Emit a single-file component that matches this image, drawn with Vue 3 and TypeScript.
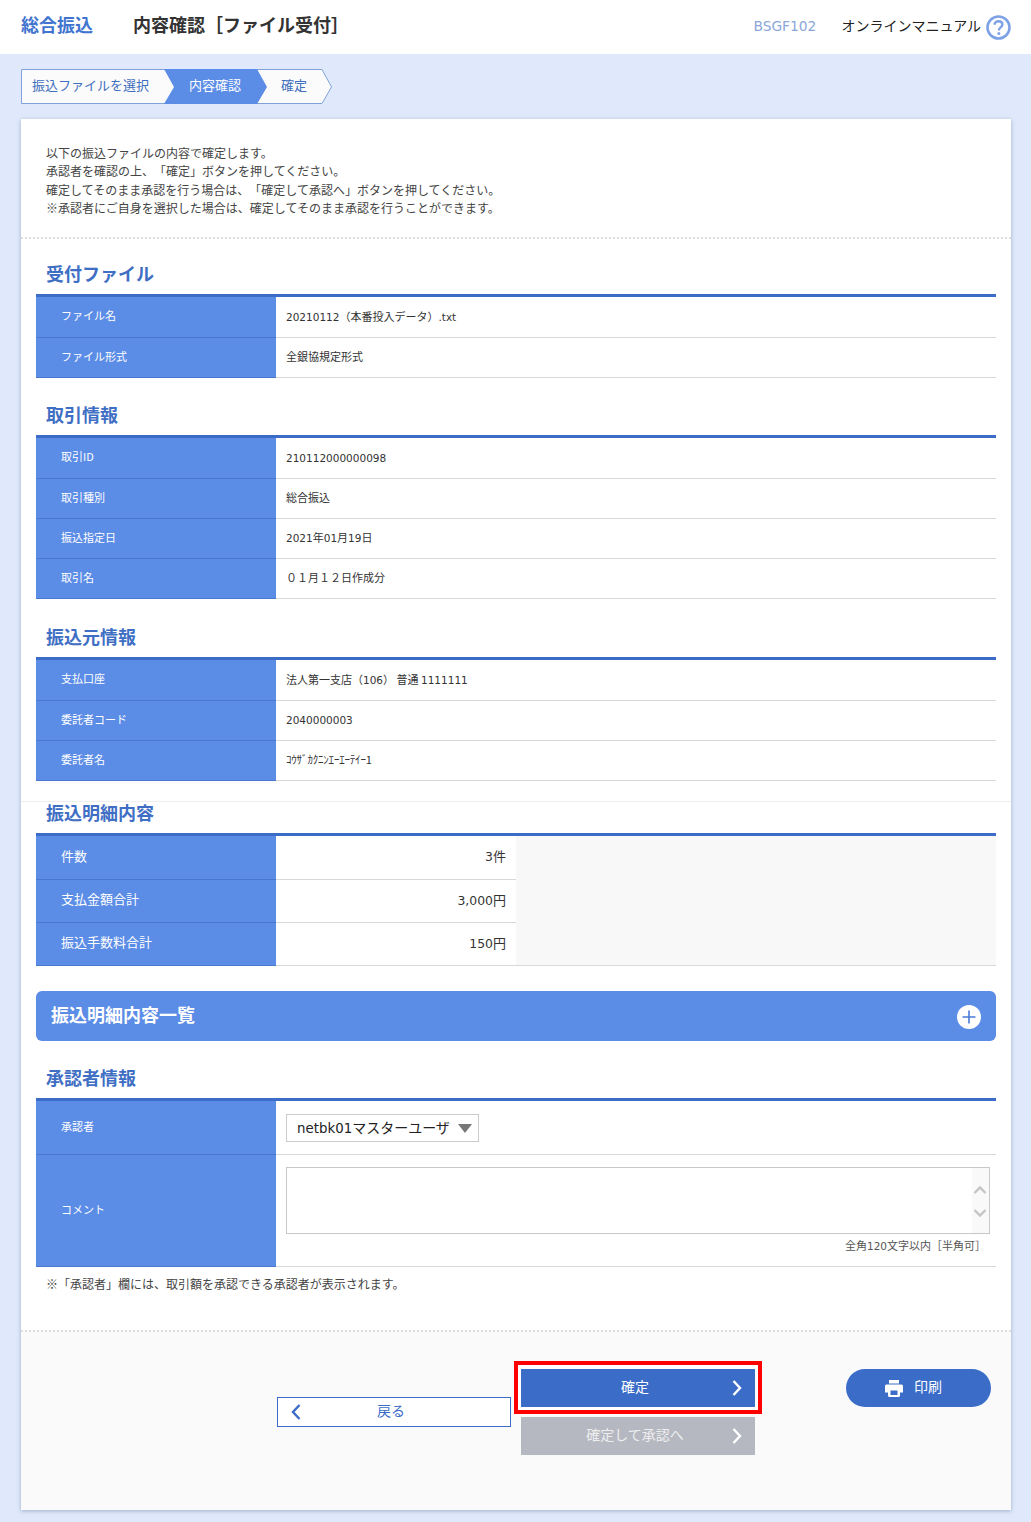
<script setup lang="ts">
interface Row {
  label: string
  value: string
  kana?: boolean
}
interface Section {
  title: string
  rows: Row[]
}
interface Segment {
  text: string
  latin: boolean
}

const sections: Section[] = [
  {
    title: '受付ファイル',
    rows: [
      { label: 'ファイル名', value: '20210112（本番投入データ）.txt' },
      { label: 'ファイル形式', value: '全銀協規定形式' },
    ],
  },
  {
    title: '取引情報',
    rows: [
      { label: '取引ID', value: '210112000000098' },
      { label: '取引種別', value: '総合振込' },
      { label: '振込指定日', value: '2021年01月19日' },
      { label: '取引名', value: '０１月１２日作成分' },
    ],
  },
  {
    title: '振込元情報',
    rows: [
      { label: '支払口座', value: '法人第一支店（106） 普通 1111111' },
      { label: '委託者コード', value: '2040000003' },
      { label: '委託者名', value: 'ｺｳｻﾞｶｸﾆﾝｴｰｴｰﾃｲｰ1', kana: true },
    ],
  },
]

const summary: Row[] = [
  { label: '件数', value: '3件' },
  { label: '支払金額合計', value: '3,000円' },
  { label: '振込手数料合計', value: '150円' },
]

const intro: string[] = [
  '以下の振込ファイルの内容で確定します。',
  '承認者を確認の上、「確定」ボタンを押してください。',
  '確定してそのまま承認を行う場合は、「確定して承認へ」ボタンを押してください。',
  '※承認者にご自身を選択した場合は、確定してそのまま承認を行うことができます。',
]

function segments(value: string): Segment[] {
  return value
    .split(/([0-9A-Za-z.,]+)/)
    .filter((text) => text.length > 0)
    .map((text) => ({ text, latin: /^[0-9A-Za-z.,]+$/.test(text) }))
}
</script>

<template>
  <div class="page">
    <header class="top">
      <h1 class="top-title">総合振込</h1>
      <div class="top-sub">内容確認［ファイル受付］</div>
      <div class="top-code">BSGF102</div>
      <div class="top-manual">オンラインマニュアル</div>
      <svg class="help" width="25" height="25" viewBox="0 0 25 25">
        <circle cx="12.5" cy="12.5" r="11" fill="#fff" stroke="#7fa2e6" stroke-width="2.6" />
        <path d="M8.6 9.8c0-2.3 1.8-3.6 3.9-3.6s3.9 1.2 3.9 3.3c0 2.9-3.6 2.9-3.6 5.9" fill="none" stroke="#7fa2e6" stroke-width="2.4" />
        <circle cx="12.8" cy="18.6" r="1.5" fill="#7fa2e6" />
      </svg>
    </header>

    <nav class="steps">
      <svg class="steps-bg" width="312" height="36" viewBox="0 0 312 36">
        <path d="M.5.5H301L310.5 18 301 34.5H.5Z" fill="#fbfbfb" stroke="#7fa3d8" />
        <path d="M143 0H236L246 18 236 35H143L153 18Z" fill="#5b8ce6" />
      </svg>
      <span class="step">振込ファイルを選択</span>
      <span class="step step-on">内容確認</span>
      <span class="step">確定</span>
    </nav>

    <main class="card">
      <div class="intro">
        <p v-for="line in intro" :key="line">{{ line }}</p>
      </div>

      <div class="body">
        <section v-for="(s, i) in sections" :key="s.title" class="sec" :class="`sec-${i}`">
          <h2 class="sec-title">{{ s.title }}</h2>
          <div class="tbl">
            <div v-for="r in s.rows" :key="r.label" class="row">
              <div class="th">{{ r.label }}</div>
              <div v-if="r.kana" class="td kana">{{ r.value }}</div>
              <div v-else class="td">
                <span>
                  <span v-for="(seg, k) in segments(r.value)" :key="k" :class="{ latin: seg.latin }">{{ seg.text }}</span>
                </span>
              </div>
            </div>
          </div>
        </section>

        <section class="sec-summary">
          <h2 class="sec-title">振込明細内容</h2>
          <div class="tbl">
            <div v-for="r in summary" :key="r.label" class="row row-summary">
              <div class="th">{{ r.label }}</div>
              <div class="td td-num">
                <span>
                  <span v-for="(seg, k) in segments(r.value)" :key="k" :class="{ latin: seg.latin }">{{ seg.text }}</span>
                </span>
              </div>
              <div class="td-blank"></div>
            </div>
          </div>
        </section>

        <div class="accordion">
          <span class="accordion-title">振込明細内容一覧</span>
          <svg class="accordion-icon" width="24" height="24" viewBox="0 0 24 24">
            <circle cx="12" cy="12" r="12" fill="#fff" />
            <path d="M12 5.5v13M5.5 12h13" stroke="#4a7bd6" stroke-width="1.6" />
          </svg>
        </div>

        <section class="sec-approver">
          <h2 class="sec-title">承認者情報</h2>
          <div class="tbl">
            <div class="row row-select">
              <div class="th">承認者</div>
              <div class="td td-select">
                <div class="select">
                  <span><span class="latin">netbk01</span>マスターユーザ</span>
                  <i class="select-arrow"></i>
                </div>
              </div>
            </div>
            <div class="row row-comment">
              <div class="th">コメント</div>
              <div class="td td-comment">
                <div class="textarea">
                  <textarea class="textarea-field" aria-label="コメント"></textarea>
                  <div class="scroll">
                    <svg width="14" height="10" viewBox="0 0 14 10"><path d="M1.5 8 7 2.5 12.5 8" fill="none" stroke="#c4c4c4" stroke-width="2.4" /></svg>
                    <svg width="14" height="10" viewBox="0 0 14 10"><path d="M1.5 2 7 7.5 12.5 2" fill="none" stroke="#c4c4c4" stroke-width="2.4" /></svg>
                  </div>
                </div>
                <div class="limit">全角<span class="latin">120</span>文字以内［半角可］</div>
              </div>
            </div>
          </div>
          <p class="note">※「承認者」欄には、取引額を承認できる承認者が表示されます。</p>
        </section>
      </div>

      <footer class="foot">
        <button class="btn btn-back">
          <svg class="chev-left" width="12" height="18" viewBox="0 0 12 18"><path d="M9.5 2 3 9l6.5 7" fill="none" stroke="#3b6cc8" stroke-width="2.4" /></svg>
          戻る
        </button>
        <div class="foot-main">
          <button class="btn btn-primary">
            確定
            <svg class="chev-right" width="12" height="18" viewBox="0 0 12 18"><path d="M2.5 2 9 9l-6.5 7" fill="none" stroke="#fff" stroke-width="2.4" /></svg>
          </button>
          <button class="btn btn-disabled">
            確定して承認へ
            <svg class="chev-right" width="12" height="18" viewBox="0 0 12 18"><path d="M2.5 2 9 9l-6.5 7" fill="none" stroke="#fff" stroke-width="2.4" /></svg>
          </button>
        </div>
        <button class="btn btn-print">
          <svg width="18" height="17" viewBox="0 0 18 17">
            <path d="M4 0h10v3.5H4zM1.5 4.5h15A1.5 1.5 0 0 1 18 6v6.5h-3V15.5a1.5 1.5 0 0 1-1.5 1.5h-9A1.5 1.5 0 0 1 3 15.5V12.5H0V6a1.5 1.5 0 0 1 1.5-1.5Z" fill="#fff" />
            <path d="M5.5 10.5h7v4.5h-7z" fill="#3b6cc8" />
          </svg>
          印刷
        </button>
      </footer>
    </main>
  </div>
</template>

<style>
html,
body {
  margin: 0;
  background: #dfe9fb;
}
</style>

<style scoped>
.page {
  height: 1522px;
  box-sizing: border-box;
  overflow: hidden;
  background: #dfe9fb;
  color: #333;
  font-family: "Noto Sans CJK JP", "Noto Sans", sans-serif;
  font-size: 12px;
  text-spacing-trim: space-all;
}
.latin {
  font-family: "DejaVu Sans", sans-serif;
  font-size: 0.955em;
}
.top {
  display: flex;
  align-items: center;
  height: 54px;
  padding: 0 20px 0 21px;
  background: #fff;
  box-sizing: border-box;
}
.top-title {
  margin: 0;
  padding-bottom: 6px;
  font-size: 18px;
  font-weight: 700;
  color: #3f74cf;
}
.top-sub {
  margin-left: 40px;
  padding-bottom: 6px;
  font-size: 18px;
  font-weight: 700;
  color: #333;
}
.top-code {
  margin-left: auto;
  padding-bottom: 2px;
  font-size: 13.8px;
  color: #8ba8d8;
  font-family: "DejaVu Sans", sans-serif;
}
.top-manual {
  margin-left: 25px;
  padding-bottom: 4px;
  font-size: 14px;
  color: #222;
}
.help {
  margin-left: 5px;
}
.steps {
  position: relative;
  display: flex;
  align-items: center;
  gap: 40px;
  height: 35px;
  box-sizing: border-box;
  margin: 15px 0 15px 21px;
  padding: 0 0 4px 11px;
  font-size: 13px;
  color: #3f6fbd;
}
.steps-bg {
  position: absolute;
  left: 0;
  top: 0;
}
.step {
  position: relative;
}
.step-on {
  color: #fff;
}
.card {
  margin: 0 20px 0 21px;
  height: 1391px;
  display: flex;
  flex-direction: column;
  background: #fff;
  box-shadow: 0 1px 4px rgba(80, 100, 140, 0.45);
}
.intro {
  padding: 25px 25px 21px;
  height: 72px;
  line-height: 18.3px;
  color: #444;
  border-bottom: 2px dotted #ddd;
}
.intro p {
  margin: 0;
}
.body {
  flex: 1;
  padding: 0 15px;
}
.sec {
  padding-top: 24px;
}
.sec-0 {
  padding-top: 22px;
}
.sec-2 {
  padding-top: 25px;
}
.sec-title {
  margin: 0 0 7px 10px;
  height: 26px;
  line-height: 24px;
  font-size: 18px;
  font-weight: 700;
  color: #3f6fc4;
}
.sec-summary {
  margin: 20px -15px 0;
  padding: 0 15px;
  border-top: 1px solid #eee;
}
.sec-summary .sec-title {
  margin-top: -2px;
}
.sec-approver {
  padding-top: 24px;
}
.tbl {
  border-top: 3px solid #3b6cc8;
}
.row {
  display: flex;
  height: 40px;
  box-sizing: border-box;
  font-size: 11px;
}
.row:first-child {
  height: 41px;
}
.th {
  flex: 0 0 240px;
  display: flex;
  align-items: center;
  padding: 0 0 4px 25px;
  box-sizing: border-box;
  color: #fff;
  background: #5b8ce6;
  border-bottom: 1px solid #4a78cf;
}
.td {
  flex: 1;
  display: flex;
  align-items: center;
  padding: 0 0 3px 10px;
  border-bottom: 1px solid #d8d8d8;
  min-width: 0;
}
.kana {
  letter-spacing: -0.2px;
}
.row-summary {
  height: 43px;
  font-size: 13px;
}
.row-summary:first-child {
  height: 44px;
}
.row-summary .th {
  padding-bottom: 5px;
}
.td-num {
  flex: 0 0 240px;
  box-sizing: border-box;
  justify-content: flex-end;
  padding: 0 10px 4px 0;
}
.td-blank {
  flex: 1;
  background: #f8f8f8;
}
.row-summary:last-child .td-blank {
  border-bottom: 1px solid #d8d8d8;
}
.accordion {
  display: flex;
  align-items: center;
  justify-content: space-between;
  height: 50px;
  margin-top: 25px;
  padding: 0 15px;
  border-radius: 6px;
  background: #5b8ce6;
  color: #fff;
  font-size: 18px;
  font-weight: 700;
}
.accordion-title {
  padding-bottom: 5px;
}
.accordion-icon {
  margin-top: 2px;
}
.row-select:first-child {
  height: 54px;
}
.td-select {
  padding: 1px 0 0 10px;
}
.select {
  display: flex;
  align-items: center;
  width: 193px;
  height: 28px;
  padding: 0 0 3px 10px;
  box-sizing: border-box;
  border: 1px solid #ccc;
  font-size: 14px;
  color: #222;
}
.select-arrow {
  margin: 3px 0 0 8px;
  width: 0;
  height: 0;
  border-left: 7px solid transparent;
  border-right: 7px solid transparent;
  border-top: 9px solid #777;
}
.row-comment {
  height: 112px;
}
.td-comment {
  flex-direction: column;
  align-items: stretch;
  padding: 12px 6px 0 10px;
}
.textarea {
  display: flex;
  height: 67px;
  box-sizing: border-box;
  border: 1px solid #c8c8c8;
}
.textarea-field {
  flex: 1;
  border: 0;
  margin: 0;
  padding: 0;
  resize: none;
  background: #fff;
  outline: none;
}
.scroll {
  width: 17px;
  display: flex;
  flex-direction: column;
  align-items: center;
  justify-content: center;
  gap: 13px;
  padding: 1px 2px 0 0;
  box-sizing: border-box;
  background: #f9f9f9;
}
.limit {
  align-self: flex-end;
  margin: 3px 4px 0 0;
  font-size: 11px;
  line-height: 16px;
  color: #555;
}
.note {
  margin: 8px 0 0 10px;
  line-height: 18px;
  color: #444;
}
.foot {
  display: flex;
  align-items: flex-start;
  height: 180px;
  box-sizing: border-box;
  padding: 37px 20px 0 256px;
  background: #fafafa;
  border-top: 2px dotted #ddd;
}
.btn {
  position: relative;
  display: flex;
  align-items: center;
  justify-content: center;
  box-sizing: border-box;
  margin: 0;
  padding: 0 6px 4px 0;
  border: 0;
  font-family: inherit;
  font-size: 14px;
}
.btn-back {
  width: 234px;
  height: 30px;
  margin-top: 28px;
  border: 1px solid #3b6cc8;
  background: #fff;
  color: #3b6cc8;
}
.chev-left {
  position: absolute;
  left: 12px;
  top: 5px;
}
.chev-right {
  position: absolute;
  right: 12px;
  top: 10px;
}
.foot-main {
  display: flex;
  flex-direction: column;
  gap: 10px;
  margin-left: 10px;
}
.btn-primary,
.btn-disabled {
  width: 234px;
  height: 38px;
  color: #fff;
}
.btn-primary {
  background: #3b6cc8;
  box-shadow: 0 0 0 4px #fff;
}
.btn-primary::before {
  content: "";
  position: absolute;
  inset: -8px -7px -7px;
  border: 4px solid #f00;
}
.btn-disabled {
  background: #b5b8c1;
  color: #eee;
}
.btn-print {
  width: 145px;
  height: 38px;
  margin-left: auto;
  padding-right: 10px;
  gap: 11px;
  border-radius: 19px;
  background: #3b6cc8;
  color: #fff;
}
.btn-print svg {
  margin-top: 4px;
}
</style>
